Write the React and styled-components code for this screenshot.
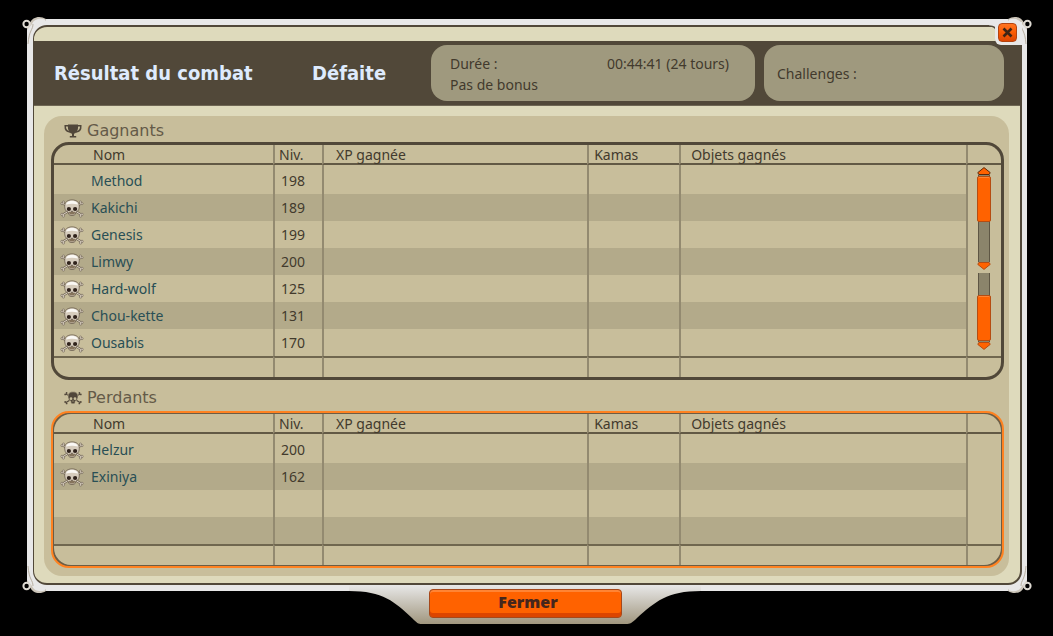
import styled, { createGlobalStyle } from "styled-components";

//------------------------------------  DATA  ------------------------------------//
const winners = [
    { name: "Method", level: 198, dead: false },
    { name: "Kakichi", level: 189, dead: true },
    { name: "Genesis", level: 199, dead: true },
    { name: "Limwy", level: 200, dead: true },
    { name: "Hard-wolf", level: 125, dead: true },
    { name: "Chou-kette", level: 131, dead: true },
    { name: "Ousabis", level: 170, dead: true },
];

const losers = [
    { name: "Helzur", level: 200, dead: true },
    { name: "Exiniya", level: 162, dead: true },
];

//------------------------------------  STYLES  ------------------------------------//
const GlobalStyle = createGlobalStyle`
    * {
        box-sizing: border-box;
    }
    body {
        margin: 0;
        background-color: #000000;
        color: #423a2d;
        font-family: "Noto Sans", sans-serif;
        font-size: 14px;
        line-height: 18px;
    }
`;

const Page = styled.div`
    padding: 19px 26px 11px 27px;
`;

const Window = styled.main`
    position: relative;
    padding: 6px 5px 6px 6px;
    background-color: #e8e8e8;
    border-radius: 12px;
`;

const Inner = styled.div`
    border: 2px solid #514839;
    border-left-width: 1px;
    border-right-width: 2px;
    border-radius: 14px;
    background-color: #dedabc;
    padding-top: 14px;
    overflow: hidden;
`;

const Ornament = styled.svg`
    position: absolute;
    width: 26px;
    height: 34px;
    ${({ $side }) => ($side === "left" ? "left: -5px;" : "right: -5px;")}
    ${({ $edge }) => ($edge === "top" ? "top: -3px;" : "bottom: -3px;")}
    transform: scale(
        ${({ $side }) => ($side === "left" ? 1 : -1)},
        ${({ $edge }) => ($edge === "top" ? 1 : -1)}
    );
`;

const CloseTab = styled.div`
    position: absolute;
    top: 3px;
    right: 5px;
    padding: 1px 5px 3px 3px;
    background-color: #e8e8e8;
    border-bottom-left-radius: 6px;
`;

const StripCorner = styled.svg`
    position: absolute;
    top: 3px;
    right: 28px;
    width: 10px;
    height: 19px;
`;

const CloseButton = styled.button`
    display: flex;
    align-items: center;
    justify-content: center;
    width: 19px;
    height: 19px;
    padding: 0;
    border: 1px solid #b44410;
    border-radius: 4px;
    background: linear-gradient(#ff7420, #fb5c04 50%, #dc4603);
    cursor: pointer;
`;

const Header = styled.header`
    display: grid;
    grid-template-columns: 258fr 119fr 324fr 249fr;
    align-items: stretch;
    padding: 4px 16px 4px 20px;
    border-bottom: 1px solid #6f6754;
    background-color: #514839;
`;

const Title = styled.h1`
    align-self: center;
    margin: 0;
    color: #deebfd;
    font-family: "DejaVu Sans Condensed", "DejaVu Sans", sans-serif;
    font-size: 20px;
    line-height: 28px;
    font-weight: bold;
    white-space: nowrap;
`;

const InfoBox = styled.div`
    display: flex;
    flex-direction: column;
    justify-content: center;
    min-height: 56px;
    padding: ${({ $wide }) => ($wide ? "2px 26px 0 19px" : "0 13px")};
    margin-left: ${({ $wide }) => ($wide ? "0" : "9px")};
    border-radius: 16px;
    background-color: #9f997e;
    line-height: 21px;
`;

const InfoLine = styled.div`
    display: flex;
    justify-content: space-between;
`;

const Panel = styled.div`
    margin: 10px 11px 7px 10px;
    padding: 0 5px 8px 7px;
    border-radius: 18px;
    background-color: #c8be9b;
`;

const Heading = styled.h2`
    display: flex;
    align-items: center;
    gap: 5px;
    height: ${({ $spaced }) => ($spaced ? "28px" : "26px")};
    margin: ${({ $spaced }) => ($spaced ? "3px" : "0")} 0 0 13px;
    padding-top: ${({ $spaced }) => ($spaced ? "2px" : "3px")};
    color: #645a48;
    font-family: "DejaVu Sans", sans-serif;
    font-size: 16px;
    font-weight: normal;
`;

const TableFrame = styled.div`
    border: ${({ $accent }) => ($accent ? "2px solid #ff8220" : "3px solid #514839")};
    border-radius: 18px;
    padding: ${({ $accent }) => ($accent ? "1px" : "0")};
    background-color: ${({ $accent }) => ($accent ? "#6c5d45" : "#514839")};
`;

const TableClip = styled.div`
    border-radius: ${({ $accent }) => ($accent ? "17px" : "15px")};
    background-color: #c8be9b;
    overflow: hidden;
`;

const Table = styled.table`
    width: 100%;
    table-layout: fixed;
    border-collapse: separate;
    border-spacing: 0;
`;

const Col = styled.col`
    width: ${({ $width }) => $width};
`;

const Th = styled.th`
    height: 20px;
    padding: 1px 0 0 ${({ $indent }) => $indent || "0"};
    border-bottom: 2px solid #625945;
    line-height: 17px;
    text-align: left;
    font-weight: normal;
    white-space: nowrap;
    & + & {
        border-left: 2px solid #938a70;
    }
`;

const Td = styled.td`
    height: 27px;
    padding: 0 0 0 6px;
    & + & {
        border-left: 2px solid #938a70;
    }
`;

const Row = styled.tr`
    &:nth-child(even) > td {
        background-color: #b3aa8a;
    }
    &:first-child > td {
        height: 29px;
        padding-top: 2px;
    }
`;

const FootTd = styled.td`
    height: 21px;
    padding: 0;
    border-top: 2px solid #70674f;
    & + & {
        border-left: 2px solid #938a70;
    }
`;

const Fighter = styled.div`
    display: flex;
    align-items: center;
    gap: 7px;
`;

const IconSlot = styled.span`
    display: flex;
    width: 24px;
    height: 20px;
`;

const Name = styled.a`
    color: #294f55;
    text-decoration: none;
`;

const ScrollCell = styled(Td)`
    padding: 0 2px 0 0;
    border-left: 2px solid #938a70;
    vertical-align: top;
`;

const Scroller = styled.div`
    display: flex;
    flex-direction: column;
    align-items: center;
    margin-bottom: 3px;
`;

const Arrow = styled.button`
    display: block;
    width: 14px;
    height: 8px;
    padding: 0;
    border: none;
    background: none;
    cursor: pointer;
    svg {
        display: block;
    }
`;

const Track = styled.div`
    display: flex;
    flex-direction: column;
    align-items: center;
    justify-content: ${({ $end }) => ($end ? "flex-end" : "flex-start")};
    width: 12px;
    height: ${({ $end }) => ($end ? "69px" : "87px")};
    padding: 1px 0;
    border: solid #5e5644;
    border-width: 0 1px;
    background-color: #8b846b;
`;

const Thumb = styled.div`
    flex: none;
    width: 14px;
    height: 46px;
    border: 1px solid #b54c12;
    border-radius: 2px;
    background-color: #ff6200;
    box-shadow: inset 0 1px 0 #ff8434;
`;

const Footer = styled.footer`
    position: relative;
    display: flex;
    justify-content: center;
    height: 40px;
    margin-top: -6px;
    padding: 4px 4px 0 0;
`;

const Shelf = styled.svg`
    position: absolute;
    top: 0;
    left: calc(50% - 178px);
    width: 352px;
    height: 40px;
`;

const Button = styled.button`
    position: relative;
    width: 193px;
    height: 29px;
    padding: 0 2px 3px 8px;
    border: 1px solid #a5481b;
    border-radius: 4px;
    background-color: #ff6200;
    box-shadow: inset 0 2px 0 #ff8434, inset 0 -4px 0 #dc4500;
    color: #46261c;
    font-family: "Open Sans", "Noto Sans", sans-serif;
    font-size: 16px;
    line-height: 18px;
    font-weight: 800;
    cursor: pointer;
`;

//------------------------------------  ICONS  ------------------------------------//
const Skull = () => (
    <svg width="24" height="20" viewBox="0 -1 24 20" aria-label="Mort" role="img">
        <path d="M3 4.5 L21 15.6 M21 4.5 L3 15.6" stroke="#776b5b" strokeWidth="2.4" />
        <g fill="#ddd3c4" stroke="#776b5b" strokeWidth="0.7">
            <circle cx="2" cy="4.6" r="1.1" />
            <circle cx="3.5" cy="3.1" r="1.1" />
            <circle cx="22" cy="4.6" r="1.1" />
            <circle cx="20.5" cy="3.1" r="1.1" />
            <circle cx="2" cy="15.4" r="1.2" />
            <circle cx="3.4" cy="16.9" r="1.2" />
            <circle cx="22" cy="15.4" r="1.2" />
            <circle cx="20.6" cy="16.9" r="1.2" />
        </g>
        <path d="M3 4.5 L21 15.6 M21 4.5 L3 15.6" stroke="#ddd3c4" strokeWidth="1" />
        <path
            d="M12 0.9 C7.2 0.9 4.6 3.4 4.7 7 C4.8 9.8 5.2 12.2 8 13 L8.8 15.4 C9.6 17 14.4 17 15.2 15.4 L16 13 C18.8 12.2 19.2 9.8 19.3 7 C19.4 3.4 16.8 0.9 12 0.9 Z"
            fill="#d6ccbd"
            stroke="#6b5e4d"
            strokeWidth="0.8"
        />
        <path d="M6 5.6 C7 0.6 17 0.6 18 5.6 C14 4.4 10 4.4 6 5.6 Z" fill="#faf8f4" />
        <path d="M8.8 12.8 L15.2 12.8 L14.4 15.6 L9.6 15.6 Z" fill="#85735b" />
        <circle cx="8.9" cy="10" r="2.1" fill="#30231c" />
        <circle cx="15.1" cy="10" r="2.1" fill="#30231c" />
        <path d="M12 11.2 L11.2 13 H12.8 Z" fill="#4b3b2f" />
    </svg>
);

const Trophy = () => (
    <svg width="18" height="14" viewBox="0 0 18 14" aria-hidden="true">
        <path
            d="M4 1.8 H1.2 C1 5 2.6 7.6 6 8 M14 1.8 H16.8 C17 5 15.4 7.6 12 8"
            fill="none"
            stroke="#51473a"
            strokeWidth="1.5"
        />
        <path
            d="M4 0.6 H14 C14.4 5.6 13.4 8.6 10 9.8 V12 H12.2 V13.6 H5.8 V12 H8 V9.8 C4.6 8.6 3.6 5.6 4 0.6 Z"
            fill="#51473a"
        />
    </svg>
);

const SmallSkull = () => (
    <svg width="18" height="14" viewBox="0 0 18 14" aria-hidden="true">
        <path d="M2 3 L16 11.5 M16 3 L2 11.5" stroke="#51473a" strokeWidth="1.2" />
        <g fill="#51473a">
            <circle cx="1.2" cy="3.4" r="0.9" />
            <circle cx="2.6" cy="2" r="0.9" />
            <circle cx="16.8" cy="3.4" r="0.9" />
            <circle cx="15.4" cy="2" r="0.9" />
            <circle cx="1.2" cy="11" r="0.9" />
            <circle cx="2.6" cy="12.4" r="0.9" />
            <circle cx="16.8" cy="11" r="0.9" />
            <circle cx="15.4" cy="12.4" r="0.9" />
        </g>
        <path
            d="M9 0.8 C5.4 0.8 3.8 2.8 4 5.2 C4 7.6 4.6 9.3 6.6 9.9 L7 12 C7.6 13.2 10.4 13.2 11 12 L11.4 9.9 C13.4 9.3 14 7.6 14 5.2 C14.2 2.8 12.6 0.8 9 0.8 Z"
            fill="#51473a"
            stroke="#c8be9b"
            strokeWidth="0.6"
        />
        <circle cx="7" cy="7.7" r="1.4" fill="#c8be9b" />
        <circle cx="11" cy="7.7" r="1.4" fill="#c8be9b" />
        <path d="M9 9 L8.3 10.4 H9.7 Z" fill="#c8be9b" />
    </svg>
);

const Triangle = ({ up }) => (
    <svg width="14" height="8" viewBox="0 0 14 8" aria-hidden="true">
        <path
            d={up ? "M7 0.6 L13.2 5.6 L12.2 7.5 H1.8 L0.8 5.6 Z" : "M7 7.4 L13.2 2.4 L12.2 0.5 H1.8 L0.8 2.4 Z"}
            fill="#ff6200"
            stroke={up ? "#59280c" : "#b54c12"}
        />
    </svg>
);

const Corner = ({ side, edge }) => (
    <Ornament $side={side} $edge={edge} viewBox="0 0 26 34" aria-hidden="true">
        <path d="M8 7 C10 1 18 -1 24 3 L24 5 L14 6 L8 14 L6 32 H5 V12 Z" fill="#cbc4b8" />
        <path d="M10 8 C12 3 18 2 23 3.5 L24 6 L15 7 L10 13 L8 24 L7 34 H5 V14 Z" fill="#e8e8e8" />
        <path d="M11 8 C11 14 7 14 6 28" fill="none" stroke="#b8b0a2" strokeWidth="1" />
        <circle cx="4.6" cy="8" r="3.2" fill="#000000" stroke="#dedad2" strokeWidth="2" />
    </Ornament>
);

//------------------------------------  COMPONENT DEVELOPMENT  ------------------------------------//
const ScrollBars = () => (
    <>
        <Scroller>
            <Arrow aria-label="Monter">
                <Triangle up />
            </Arrow>
            <Track>
                <Thumb />
            </Track>
            <Arrow aria-label="Descendre">
                <Triangle />
            </Arrow>
        </Scroller>
        <Scroller>
            <Track $end>
                <Thumb />
            </Track>
            <Arrow aria-label="Descendre à la fin">
                <Triangle />
            </Arrow>
        </Scroller>
    </>
);

const FighterTable = ({ label, fighters, rows, accent, scroll }) => {
    const lines = Array.from({ length: rows }, (_, i) => fighters[i] || null);

    return (
        <TableFrame $accent={accent}>
            <TableClip $accent={accent}>
                <Table aria-label={label}>
                    <colgroup>
                        <Col $width="219px" />
                        <Col $width="49px" />
                        <Col $width="28%" />
                        <Col $width="92px" />
                        <Col />
                        <Col $width="35px" />
                    </colgroup>
                    <thead>
                        <tr>
                            <Th $indent="39px">Nom</Th>
                            <Th $indent="4px">Niv.</Th>
                            <Th $indent="12px">XP gagnée</Th>
                            <Th $indent="5px">Kamas</Th>
                            <Th $indent="10px">Objets gagnés</Th>
                            <Th />
                        </tr>
                    </thead>
                    <tbody>
                        {lines.map((fighter, i) => (
                            <Row key={i}>
                                <Td>
                                    {fighter && (
                                        <Fighter>
                                            <IconSlot>{fighter.dead && <Skull />}</IconSlot>
                                            <Name href={`#${fighter.name}`}>{fighter.name}</Name>
                                        </Fighter>
                                    )}
                                </Td>
                                <Td>{fighter && fighter.level}</Td>
                                <Td />
                                <Td />
                                <Td />
                                {i === 0 && <ScrollCell rowSpan={rows}>{scroll && <ScrollBars />}</ScrollCell>}
                            </Row>
                        ))}
                    </tbody>
                    <tfoot>
                        <tr>
                            <FootTd />
                            <FootTd />
                            <FootTd />
                            <FootTd />
                            <FootTd />
                            <FootTd />
                        </tr>
                    </tfoot>
                </Table>
            </TableClip>
        </TableFrame>
    );
};

const App = () => {
    return (
        <Page>
            <GlobalStyle />
            <Window>
                <Corner side="left" edge="top" />
                <Corner side="right" edge="top" />
                <Corner side="left" edge="bottom" />
                <Corner side="right" edge="bottom" />
                <Inner>
                    <Header>
                        <Title>Résultat du combat</Title>
                        <Title as="p">Défaite</Title>
                        <InfoBox $wide>
                            <InfoLine>
                                <span>Durée :</span>
                                <span>00:44:41 (24 tours)</span>
                            </InfoLine>
                            <InfoLine>Pas de bonus</InfoLine>
                        </InfoBox>
                        <InfoBox>Challenges :</InfoBox>
                    </Header>
                    <Panel>
                        <Heading>
                            <Trophy />
                            Gagnants
                        </Heading>
                        <FighterTable label="Gagnants" fighters={winners} rows={7} scroll />
                        <Heading $spaced>
                            <SmallSkull />
                            Perdants
                        </Heading>
                        <FighterTable label="Perdants" fighters={losers} rows={4} accent />
                    </Panel>
                </Inner>
                <StripCorner viewBox="0 0 10 19" aria-hidden="true">
                    <path d="M0 3 H10 V19 H8 V10 C8 6 6 4 0 4 Z" fill="#e8e8e8" />
                    <path d="M0 4 C5 4 7.5 6 7.5 10 V19" fill="none" stroke="#514839" strokeWidth="1.5" />
                </StripCorner>
                <CloseTab>
                    <CloseButton aria-label="Fermer la fenêtre">
                        <svg width="11" height="11" viewBox="0 0 11 11" aria-hidden="true">
                            <path d="M1.5 1.5 L9.5 9.5 M9.5 1.5 L1.5 9.5" stroke="#3f2415" strokeWidth="2.6" />
                        </svg>
                    </CloseButton>
                </CloseTab>
            </Window>
            <Footer>
                <Shelf viewBox="0 0 352 40" aria-hidden="true">
                    <defs>
                        <linearGradient id="shelf" x1="0" y1="0" x2="0" y2="1">
                            <stop offset="0" stopColor="#e8e8e8" />
                            <stop offset="1" stopColor="#a0967e" />
                        </linearGradient>
                    </defs>
                    <path
                        d="M0 0 H352 V6 C318 6 306 17 288 33 C283 38 281 39 277 39 H73 C69 39 68 38 63 33 C46 17 34 6 0 6 Z"
                        fill="url(#shelf)"
                    />
                </Shelf>
                <Button>Fermer</Button>
            </Footer>
        </Page>
    );
};

export default App;
